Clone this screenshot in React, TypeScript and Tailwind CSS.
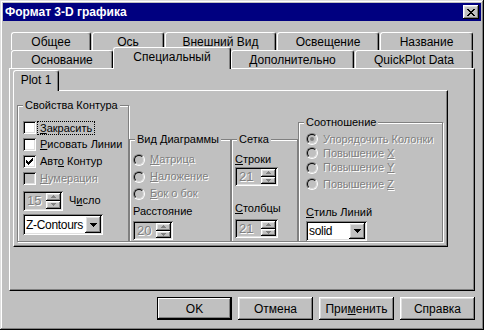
import React from "react";

const raised =
  "shadow-[inset_-1px_-1px_#000,inset_1px_1px_#fff,inset_-2px_-2px_#808080,inset_2px_2px_#dfdfdf]";
const sunken =
  "shadow-[inset_1px_1px_#808080,inset_-1px_-1px_#fff,inset_2px_2px_#000,inset_-2px_-2px_#dfdfdf]";
const dis = "text-[#808080] [text-shadow:1px_1px_0_#fff]";

const Tab = ({ label, className }: { label: string; className: string }) => (
  <div
    className={`flex items-center justify-center bg-[#c0c0c0] border-t border-l border-r border-t-white border-l-white border-r-black rounded-t-[3px] shadow-[inset_-1px_0_#808080] whitespace-nowrap ${className}`}
  >
    {label}
  </div>
);

const GroupBox = ({
  title,
  className,
  children,
}: {
  title: string;
  className: string;
  children?: React.ReactNode;
}) => (
  <div
    className={`relative border border-[#808080] shadow-[inset_1px_1px_#fff,1px_1px_#fff] ${className}`}
  >
    <span className="absolute -top-[8px] left-[5px] bg-[#c0c0c0] px-[2px] leading-[14px] whitespace-nowrap">
      {title}
    </span>
    {children}
  </div>
);

const Check = ({ checked, disabled }: { checked?: boolean; disabled?: boolean }) => (
  <div
    className={`w-[13px] h-[13px] shrink-0 ${sunken} ${disabled ? "bg-[#c0c0c0]" : "bg-white"} flex items-center justify-center`}
  >
    {checked && (
      <svg width="7" height="7" viewBox="0 0 7 7" shapeRendering="crispEdges">
        <path
          d="M0 2h1v3h-1zM1 3h1v3h-1zM2 4h1v3h-1zM3 3h1v3h-1zM4 2h1v3h-1zM5 1h1v3h-1zM6 0h1v3h-1z"
          fill="#000"
        />
      </svg>
    )}
  </div>
);

const Radio = ({ selected }: { selected?: boolean }) => (
  <div className="w-[12px] h-[12px] shrink-0 rounded-full border border-t-[#808080] border-l-[#808080] border-r-white border-b-white">
    <div className="w-full h-full rounded-full border border-t-black border-l-black border-r-[#dfdfdf] border-b-[#dfdfdf] bg-[#c0c0c0] flex items-center justify-center">
      {selected && <div className="w-[4px] h-[4px] rounded-full bg-[#808080]" />}
    </div>
  </div>
);

const Arrow = ({ up, disabled }: { up?: boolean; disabled?: boolean }) => (
  <svg width="5" height="3" viewBox="0 0 5 3" shapeRendering="crispEdges">
    <path
      d={up ? "M2 0h1v1h1v1h1v1h-5v-1h1v-1h1z" : "M0 0h5v1h-1v1h-1v1h-1v-1h-1v-1h-1z"}
      fill={disabled ? "#808080" : "#000"}
    />
  </svg>
);

const Spin = ({ value, className }: { value: string; className: string }) => (
  <div className={`flex items-stretch p-[2px] bg-[#c0c0c0] ${sunken} ${className}`}>
    <div className={`flex-1 flex items-center pl-[2px] text-[13px] ${dis}`}>{value}</div>
    <div className="w-[15px] flex flex-col">
      <div className={`flex-1 flex items-center justify-center bg-[#c0c0c0] ${raised}`}>
        <Arrow up disabled />
      </div>
      <div className={`flex-1 flex items-center justify-center bg-[#c0c0c0] ${raised}`}>
        <Arrow disabled />
      </div>
    </div>
  </div>
);

const Combo = ({ value, className }: { value: string; className: string }) => (
  <div className={`flex items-stretch p-[2px] bg-white ${sunken} ${className}`}>
    <div className="flex-1 flex items-center pl-[1px] text-[12px] leading-none whitespace-nowrap overflow-hidden tracking-[-0.3px]">
      {value}
    </div>
    <div className={`w-[16px] shrink-0 flex items-center justify-center bg-[#c0c0c0] ${raised}`}>
      <svg width="7" height="4" viewBox="0 0 7 4" shapeRendering="crispEdges">
        <path d="M0 0h7v1h-1v1h-1v1h-1v1h-1v-1h-1v-1h-1v-1h-1z" fill="#000" />
      </svg>
    </div>
  </div>
);

const Btn = ({ children, def }: { children: React.ReactNode; def?: boolean }) => (
  <div
    className={`w-[75px] h-[23px] flex items-center justify-center bg-[#c0c0c0] ${
      def
        ? "border border-black shadow-[inset_-1px_-1px_#000,inset_1px_1px_#fff,inset_-2px_-2px_#808080]"
        : raised
    }`}
  >
    {children}
  </div>
);

export default function App() {
  return (
    <div
      className={`w-[484px] h-[330px] bg-[#c0c0c0] p-[3px] flex flex-col text-[11px] text-black font-['Liberation_Sans',Arial,sans-serif] shadow-[inset_-1px_-1px_#000,inset_1px_1px_#dfdfdf,inset_-2px_-2px_#808080,inset_2px_2px_#fff]`}
    >
      {/* title bar */}
      <div className="h-[18px] bg-[#000080] flex items-center justify-between pl-[2px] pr-[2px]">
        <span className="text-white font-bold text-[12px] leading-none">Формат 3-D графика</span>
        <div className={`w-[16px] h-[14px] bg-[#c0c0c0] flex items-center justify-center ${raised}`}>
          <svg width="8" height="7" viewBox="0 0 8 7" shapeRendering="crispEdges">
            <path
              d="M0 0h2v1h1v1h2v-1h1v-1h2v1h-1v1h-1v1h-1v1h1v1h1v1h1v1h-2v-1h-1v-1h-2v1h-1v1h-2v-1h1v-1h1v-1h1v-1h-1v-1h-1v-1h-1z"
              fill="#000"
            />
          </svg>
        </div>
      </div>

      <div className="ml-[6px] mt-[11px] w-[466px] flex flex-col">
        {/* tab rows */}
        <div className="flex pl-[2px] gap-px h-[18px] text-[12px]">
          <Tab label="Общее" className="w-[80px]" />
          <Tab label="Ось" className="w-[72px]" />
          <Tab label="Внешний Вид" className="w-[111px]" />
          <Tab label="Освещение" className="w-[102px]" />
          <Tab label="Название" className="w-[93px]" />
        </div>
        <div className="flex items-end pl-[2px] h-[18px] text-[12px]">
          <Tab label="Основание" className="w-[102px] h-[18px]" />
          <Tab label="Специальный" className="w-[118px] h-[22px] -mb-px pb-[3px] relative z-10" />
          <Tab label="Дополнительно" className="w-[123px] h-[18px]" />
          <Tab label="QuickPlot Data" className="w-[118px] h-[18px] ml-px" />
        </div>

        {/* main panel */}
        <div className="w-[466px] h-[223px] border border-t-white border-l-white border-r-black border-b-black shadow-[inset_-1px_-1px_#808080] pl-[3px] pt-px">
          <div className="flex">
            <Tab label="Plot 1" className="w-[46px] h-[21px] -mb-px relative z-10 pb-[2px] text-[12px]" />
          </div>
          <div className="w-[435px] h-[157px] border border-t-white border-l-white border-r-black border-b-black shadow-[inset_-1px_-1px_#808080] pl-[3px] pt-[14px]">
            <div className="flex items-end h-[137px]">
              <GroupBox title="Свойства Контура" className="w-[112px] h-[137px] pl-[5px] pt-[13px]">
                <div className="flex items-center h-[17px]">
                  <Check />
                  <span className="ml-[2px] px-[2px] outline outline-1 outline-dotted outline-black leading-[12px]">
                    <u>З</u>акрасить
                  </span>
                </div>
                <div className="flex items-center h-[17px]">
                  <Check />
                  <span className="ml-[4px]">
                    <u>Р</u>исовать Линии
                  </span>
                </div>
                <div className="flex items-center h-[17px]">
                  <Check checked />
                  <span className="ml-[4px]">
                    Авт<u>о</u> Контур
                  </span>
                </div>
                <div className="flex items-center h-[17px]">
                  <Check disabled />
                  <span className={`ml-[4px] ${dis}`}>
                    <u>Н</u>умерация
                  </span>
                </div>
                <div className="flex items-center h-[27px]">
                  <Spin value="15" className="w-[40px] h-[20px]" />
                  <span className="ml-[6px]">
                    Ч<u>и</u>сло
                  </span>
                </div>
                <Combo value="Z-Contours" className="w-[80px] h-[21px]" />
              </GroupBox>

              <GroupBox title="Вид Диаграммы" className="w-[102px] h-[103px] pl-[3px] pt-[11px]">
                <div className="flex items-center h-[17px]">
                  <Radio />
                  <span className={`ml-[5px] ${dis}`}>
                    <u>М</u>атрица
                  </span>
                </div>
                <div className="flex items-center h-[17px]">
                  <Radio />
                  <span className={`ml-[5px] ${dis}`}>
                    <u>Н</u>аложение
                  </span>
                </div>
                <div className="flex items-center h-[17px]">
                  <Radio />
                  <span className={`ml-[5px] ${dis}`}>
                    <u>Б</u>ок о бок
                  </span>
                </div>
                <div className="h-[19px] flex items-center">Расстояние</div>
                <Spin value="20" className="w-[40px] h-[19px]" />
              </GroupBox>

              <GroupBox title="Сетка" className="w-[67px] h-[103px] pl-[3px] pt-[11px]">
                <div className="h-[16px] flex items-center">
                  <span>
                    <u>С</u>троки
                  </span>
                </div>
                <Spin value="21" className="w-[43px] h-[19px]" />
                <div className="h-[33px] flex items-center pt-[12px]">
                  <span>
                    <u>С</u>толбцы
                  </span>
                </div>
                <Spin value="21" className="w-[43px] h-[19px]" />
              </GroupBox>

              <GroupBox title="Соотношение" className="w-[145px] h-[120px] pl-[7px] pt-[9px]">
                <div className="flex items-center h-[14px]">
                  <Radio selected />
                  <span className={`ml-[5px] ${dis}`}>Упорядочить Колонки</span>
                </div>
                <div className="flex items-center h-[14px]">
                  <Radio />
                  <span className={`ml-[5px] ${dis}`}>
                    Повышение <u>X</u>
                  </span>
                </div>
                <div className="flex items-center h-[15px]">
                  <Radio />
                  <span className={`ml-[5px] ${dis}`}>
                    Повышение <u>Y</u>
                  </span>
                </div>
                <div className="flex items-center h-[16px] pt-[2px]">
                  <Radio />
                  <span className={`ml-[5px] ${dis}`}>
                    Повышение <u>Z</u>
                  </span>
                </div>
                <div className="h-[30px] flex items-center pt-[12px]">
                  <span>
                    <u>С</u>тиль Линий
                  </span>
                </div>
                <Combo value="solid" className="w-[61px] h-[20px]" />
              </GroupBox>
            </div>
          </div>
        </div>

        {/* buttons */}
        <div className="flex justify-end gap-[6px] mt-[6px] text-[12px]">
          <Btn def>OK</Btn>
          <Btn>Отмена</Btn>
          <Btn>
            При<u>м</u>енить
          </Btn>
          <Btn>Справка</Btn>
        </div>
      </div>
    </div>
  );
}
